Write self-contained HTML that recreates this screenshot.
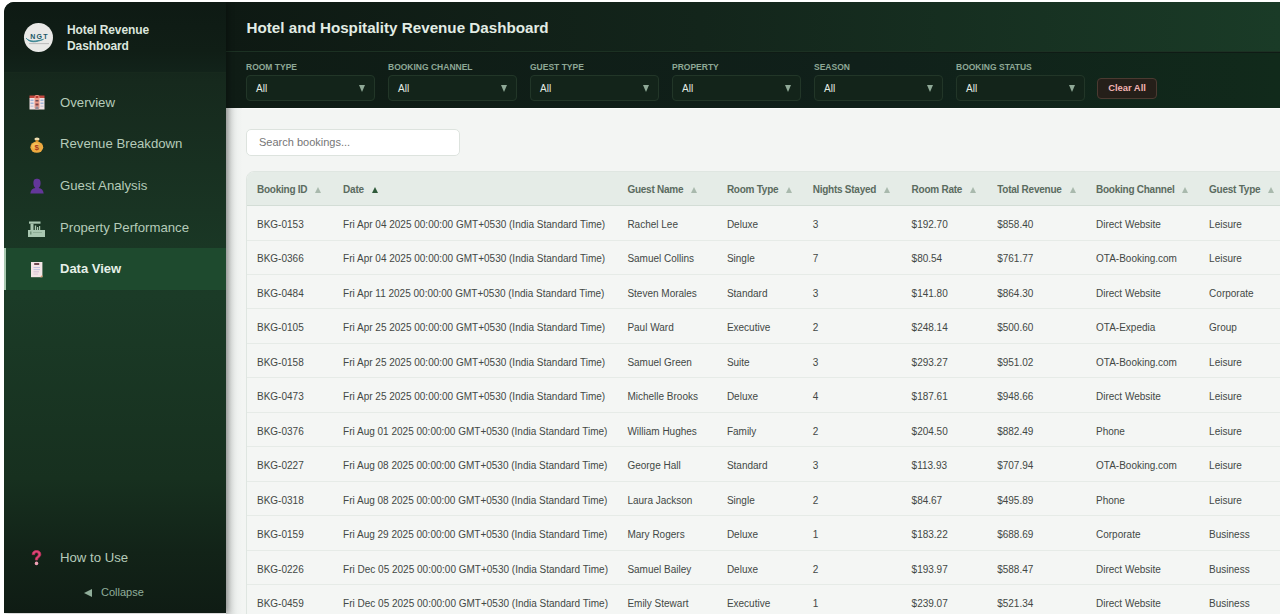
<!DOCTYPE html>
<html><head><meta charset="utf-8">
<style>
*{box-sizing:border-box;margin:0;padding:0}
html,body{width:1280px;height:614px;overflow:hidden;background:#fff;font-family:"Liberation Sans",sans-serif}
#app{position:absolute;left:4px;top:2px;width:1276px;height:612px;border-top-left-radius:10px;overflow:hidden;background:transparent}
#side{position:absolute;left:0;top:0;width:222px;height:610.5px;background:linear-gradient(180deg,#0f1c15 0%,#16291d 13%,#1b3b27 48%,#17301f 78%,#122318 90%,#0f1c14 100%);z-index:3;box-shadow:2px 0 6px rgba(0,0,0,0.35)}
#side .brand{position:absolute;left:0;top:0;width:222px;height:71px;background:linear-gradient(180deg,#0e1a14 0%,#101e16 70%,#12231a 100%);border-bottom:1px solid #17291d}
#logo{position:absolute;left:20px;top:21px;width:29px;height:29px;border-radius:50%;background:#e9e9e7}
.bt{position:absolute;left:63px;top:21px;color:#dce6de;letter-spacing:-0.1px;font-weight:700;font-size:12px;line-height:15.5px;width:120px}
.nav{position:absolute;left:0;width:222px;height:42px}
.nav .ic{position:absolute;left:24px;top:13px;width:16px;height:16px}
.nav .tx{position:absolute;left:56px;top:0;line-height:42px;font-size:13.2px;color:#b5cbb9;white-space:nowrap}
.sic{position:absolute;z-index:2}
#collapse{position:absolute;left:80px;top:582px;height:16px;color:#90ae9a;font-size:11px;line-height:16px;white-space:nowrap}
#collapse i{position:absolute;left:0;top:4.5px;width:0;height:0;border-top:4.2px solid transparent;border-bottom:4.2px solid transparent;border-right:8px solid #90ae9a}
#collapse span{position:absolute;left:17px;top:0}
.nav.act{background:#1e4a2e;border-left:2px solid #a9c9b1}
.nav.act .ic{left:22px}
.nav.act .tx{left:54px;font-weight:700;color:#e6f0e8;font-size:13px}
#main-h{position:absolute;left:222px;top:0;width:1054px;height:106px;background:#0f1b15;z-index:1}
#title{position:absolute;left:0;top:0;width:1054px;height:50px;background:linear-gradient(90deg,#0e1913 0%,#13251b 45%,#1a3b27 100%);border-bottom:1px solid #1c3123}
#title h1{position:absolute;left:20.5px;top:0;line-height:51px;font-size:15.2px;color:#e2ece4;font-weight:700;white-space:nowrap}
#filters{position:absolute;left:0;top:51px;width:1054px;height:55px;background:linear-gradient(90deg,#0f1c15 0%,#10201a 60%,#112a1b 100%)}
.fg{position:absolute;top:0;width:129px}
.fg .lb{position:absolute;left:0;top:8px;font-size:8.5px;font-weight:700;color:#8ea896;white-space:nowrap;line-height:12px}
.fg .sel{position:absolute;left:0;top:22px;width:129px;height:26px;border:1px solid #223628;border-radius:4px;background:#13241a}
.fg .sel span{position:absolute;left:9px;top:0;line-height:25px;font-size:10px;color:#e3ece5}
.fg .sel i{position:absolute;right:9px;top:9px;width:0;height:0;border-left:3.5px solid transparent;border-right:3.5px solid transparent;border-top:7px solid #8fa997}
#clear{position:absolute;left:871px;top:25px;width:60px;height:21px;border:1px solid #4b3a31;border-radius:4px;background:#251f19;color:#f2b3b3;font-weight:700;font-size:9.4px;line-height:17.5px;text-align:center}
#content{position:absolute;left:222px;top:106px;width:1054px;height:506px;background:#f3f5f3;border-top:1px solid #fbfcfb}
#shadow{position:absolute;left:222px;top:106px;width:16px;height:506px;background:linear-gradient(90deg,#d3d6d4,#eef1ef 70%,#f3f5f3);z-index:2}
#search{position:absolute;left:20px;top:20px;width:214px;height:27px;border:1px solid #dde3de;border-radius:5px;background:#fff}
#search span{position:absolute;left:12px;top:0;line-height:25px;font-size:11px;color:#767676}
#tbl{position:absolute;left:20px;top:62px;width:1100px;height:460px;border:1px solid #dfe6e1;border-radius:8px;overflow:hidden;background:#f4f6f4}
.hr{position:absolute;left:0;top:0;width:1100px;height:34px;background:#e5ece7;border-bottom:1px solid #d3ddd6}
.th{position:absolute;top:1px;line-height:34px;font-size:10px;font-weight:700;color:#5b6b5f;letter-spacing:-0.25px;white-space:nowrap}
.th b{display:inline-block;width:0;height:0;border-left:3.6px solid transparent;border-right:3.6px solid transparent;border-bottom:6px solid #a9b9ad;margin-left:8px;vertical-align:0px}
.th b.on{border-bottom-color:#2f5a3a}
.row{position:absolute;left:0;width:1100px;height:34.6px;border-bottom:1px solid #e6ebe7}
.td{position:absolute;top:2px;line-height:34px;font-size:10px;color:#434845;white-space:nowrap}
</style></head><body>
<div id="app">
  <div id="side">
    <div class="brand">
      <div id="logo"><svg width="29" height="29" viewBox="0 0 29 29">
        <text x="15.6" y="15.9" font-family="Liberation Sans" font-weight="700" font-size="7" fill="#1a5866" text-anchor="middle" letter-spacing="1.3">NGT</text>
        <path d="M2.2 15.2 C5 18.8 12 18.6 19.5 16.3 C12.5 19.6 5.5 20 2.2 15.2Z" fill="#2f7f8e" stroke="#2f7f8e" stroke-width="0.7"/>
        <rect x="5" y="20.2" width="20" height="0.9" fill="#a9a9a9" opacity="0.8"/>
      </svg></div>
      <div class="bt">Hotel Revenue<br>Dashboard</div>
    </div>
    <div class="nav" style="top:79.5px"><div class="ic"></div><div class="tx">Overview</div></div>
    <div class="nav" style="top:121.2px"><div class="ic"></div><div class="tx">Revenue Breakdown</div></div>
    <div class="nav" style="top:162.9px"><div class="ic"></div><div class="tx">Guest Analysis</div></div>
    <div class="nav" style="top:204.6px"><div class="ic"></div><div class="tx">Property Performance</div></div>
    <div class="nav act" style="top:246px"><div class="ic"></div><div class="tx">Data View</div></div>
    <div class="nav" style="top:535px"><div class="ic"></div><div class="tx">How to Use</div></div>
    <svg class="sic" style="left:24.5px;top:93px" width="16" height="15" viewBox="0 0 16 15">
      <rect x="0.5" y="0.5" width="15" height="3" fill="#c2473f"/>
      <rect x="0.5" y="3" width="15" height="11.5" fill="#efe2e4"/>
      <rect x="5.5" y="0" width="5" height="14.5" rx="2" fill="#ee9a88"/>
      <rect x="6.6" y="1" width="2.8" height="2" fill="#b93a32"/>
      <rect x="1.5" y="4.5" width="3" height="1.5" fill="#9fb4d8"/>
      <rect x="11.5" y="4.5" width="3" height="1.5" fill="#9fb4d8"/>
      <rect x="1.5" y="7.5" width="3" height="1.5" fill="#9fb4d8"/>
      <rect x="11.5" y="7.5" width="3" height="1.5" fill="#9fb4d8"/>
      <rect x="1.5" y="10.5" width="3" height="1.5" fill="#c9c9d9"/>
      <rect x="11.5" y="10.5" width="3" height="1.5" fill="#c9c9d9"/>
      <rect x="6.5" y="5" width="3" height="1.5" fill="#6b4a55"/>
      <rect x="6.5" y="8.5" width="3" height="2" fill="#7a4048"/>
      <rect x="6.5" y="11.5" width="3" height="3" fill="#8a8a9a"/>
    </svg>
    <svg class="sic" style="left:25.5px;top:134.5px" width="14" height="16" viewBox="0 0 14 16">
      <ellipse cx="7" cy="2" rx="2.6" ry="1.6" fill="#eedcae"/>
      <rect x="5.6" y="3" width="2.8" height="2" fill="#c98a2a"/>
      <ellipse cx="6.8" cy="10.2" rx="6.4" ry="5.6" fill="#eeaa40"/>
      <ellipse cx="5.5" cy="9" rx="3.5" ry="3" fill="#f5c460" opacity="0.7"/>
      <text x="6.8" y="13.3" font-family="Liberation Sans" font-weight="700" font-size="8" fill="#a8361c" text-anchor="middle">$</text>
    </svg>
    <svg class="sic" style="left:26px;top:176px" width="14" height="16" viewBox="0 0 14 16">
      <path d="M3.4 5.2 C3.4 1.6 4.8 0.8 7 0.8 C9.2 0.8 10.6 1.6 10.6 5.2 C10.6 7.8 9.6 9.3 8.6 10 C11.5 10.4 13.3 12 13.7 15.5 L0.3 15.5 C0.7 12 2.5 10.4 5.4 10 C4.4 9.3 3.4 7.8 3.4 5.2Z" fill="#63379a"/>
    </svg>
    <svg class="sic" style="left:24px;top:218.5px" width="18" height="16" viewBox="0 0 18 16">
      <rect x="1" y="0.5" width="11.5" height="2.2" fill="#a9c7b1"/>
      <rect x="2.5" y="2.7" width="3" height="7" fill="#a9c7b1"/>
      <rect x="6.8" y="4.5" width="1.4" height="5" fill="#a9c7b1"/>
      <rect x="9" y="6" width="1.2" height="3.5" fill="#a9c7b1"/>
      <rect x="11" y="5" width="1.2" height="4.5" fill="#a9c7b1"/>
      <rect x="0" y="9" width="17" height="7" fill="#a9c7b1"/>
      <rect x="2" y="10.5" width="1.5" height="3" fill="#6f8f78"/>
      <rect x="5" y="11" width="9" height="1" fill="#8fae97"/>
    </svg>
    <svg class="sic" style="left:26.8px;top:259.8px" width="12" height="16" viewBox="0 0 12 16">
      <rect x="0" y="0" width="11.4" height="15.2" fill="#f3e6e6"/>
      <rect x="3.2" y="1" width="5" height="2" fill="#6d4a52"/>
      <rect x="2.5" y="5" width="6.5" height="0.9" fill="#b9bfe0"/>
      <rect x="2.5" y="7.2" width="6.5" height="0.9" fill="#b9bfe0"/>
      <rect x="2.5" y="9.4" width="5.5" height="0.9" fill="#cdb9cf"/>
      <rect x="2.5" y="11.6" width="4.5" height="0.9" fill="#d8c6d4"/>
      <path d="M9 15.2 L11.4 12.8 L11.4 15.2Z" fill="#d99a70"/>
    </svg>
    <svg class="sic" style="left:27px;top:548px" width="11" height="16" viewBox="0 0 11 16">
      <path d="M1.2 4.6 C1.2 1.8 3 0.5 5.5 0.5 C8 0.5 9.8 1.9 9.8 4.3 C9.8 6.4 8.3 7.2 7.3 8 C6.6 8.5 6.6 9 6.6 10 L4.4 10 C4.4 8.5 4.6 7.6 5.8 6.6 C6.8 5.8 7.3 5.3 7.3 4.4 C7.3 3.3 6.6 2.6 5.5 2.6 C4.3 2.6 3.6 3.4 3.6 4.6Z" fill="#e2487a" stroke="#c8305e" stroke-width="0.8"/>
      <circle cx="5.5" cy="13.4" r="1.8" fill="#eea0b4"/>
    </svg>
    <div id="collapse"><i></i><span>Collapse</span></div>

  </div>
  <div id="main-h">
    <div id="title"><h1>Hotel and Hospitality Revenue Dashboard</h1></div>
    <div id="filters">
      <div class="fg" style="left:20px"><div class="lb">ROOM TYPE</div><div class="sel"><span>All</span><i></i></div></div>
      <div class="fg" style="left:162px"><div class="lb">BOOKING CHANNEL</div><div class="sel"><span>All</span><i></i></div></div>
      <div class="fg" style="left:304px"><div class="lb">GUEST TYPE</div><div class="sel"><span>All</span><i></i></div></div>
      <div class="fg" style="left:446px"><div class="lb">PROPERTY</div><div class="sel"><span>All</span><i></i></div></div>
      <div class="fg" style="left:588px"><div class="lb">SEASON</div><div class="sel"><span>All</span><i></i></div></div>
      <div class="fg" style="left:730px"><div class="lb">BOOKING STATUS</div><div class="sel"><span>All</span><i></i></div></div>
      <div id="clear">Clear All</div>
    </div>
  </div>
  <div id="shadow"></div>
  <div id="content">
    <div id="search"><span>Search bookings...</span></div>
    <div id="tbl">
<div class="hr">
<div class="th" style="left:10.0px">Booking ID<b></b></div>
<div class="th" style="left:96.1px">Date<b class="on"></b></div>
<div class="th" style="left:380.4px">Guest Name<b></b></div>
<div class="th" style="left:479.9px">Room Type<b></b></div>
<div class="th" style="left:565.7px">Nights Stayed<b></b></div>
<div class="th" style="left:664.6px">Room Rate<b></b></div>
<div class="th" style="left:750.2px">Total Revenue<b></b></div>
<div class="th" style="left:849.0px">Booking Channel<b></b></div>
<div class="th" style="left:962.1px">Guest Type<b></b></div>
</div>
<div class="row" style="top:34.00px">
<div class="td" style="left:10.0px">BKG-0153</div>
<div class="td" style="left:96.1px">Fri Apr 04 2025 00:00:00 GMT+0530 (India Standard Time)</div>
<div class="td" style="left:380.4px">Rachel Lee</div>
<div class="td" style="left:479.9px">Deluxe</div>
<div class="td" style="left:565.7px">3</div>
<div class="td" style="left:664.6px">$192.70</div>
<div class="td" style="left:750.2px">$858.40</div>
<div class="td" style="left:849.0px">Direct Website</div>
<div class="td" style="left:962.1px">Leisure</div>
</div>
<div class="row" style="top:68.45px">
<div class="td" style="left:10.0px">BKG-0366</div>
<div class="td" style="left:96.1px">Fri Apr 04 2025 00:00:00 GMT+0530 (India Standard Time)</div>
<div class="td" style="left:380.4px">Samuel Collins</div>
<div class="td" style="left:479.9px">Single</div>
<div class="td" style="left:565.7px">7</div>
<div class="td" style="left:664.6px">$80.54</div>
<div class="td" style="left:750.2px">$761.77</div>
<div class="td" style="left:849.0px">OTA-Booking.com</div>
<div class="td" style="left:962.1px">Leisure</div>
</div>
<div class="row" style="top:102.90px">
<div class="td" style="left:10.0px">BKG-0484</div>
<div class="td" style="left:96.1px">Fri Apr 11 2025 00:00:00 GMT+0530 (India Standard Time)</div>
<div class="td" style="left:380.4px">Steven Morales</div>
<div class="td" style="left:479.9px">Standard</div>
<div class="td" style="left:565.7px">3</div>
<div class="td" style="left:664.6px">$141.80</div>
<div class="td" style="left:750.2px">$864.30</div>
<div class="td" style="left:849.0px">Direct Website</div>
<div class="td" style="left:962.1px">Corporate</div>
</div>
<div class="row" style="top:137.35px">
<div class="td" style="left:10.0px">BKG-0105</div>
<div class="td" style="left:96.1px">Fri Apr 25 2025 00:00:00 GMT+0530 (India Standard Time)</div>
<div class="td" style="left:380.4px">Paul Ward</div>
<div class="td" style="left:479.9px">Executive</div>
<div class="td" style="left:565.7px">2</div>
<div class="td" style="left:664.6px">$248.14</div>
<div class="td" style="left:750.2px">$500.60</div>
<div class="td" style="left:849.0px">OTA-Expedia</div>
<div class="td" style="left:962.1px">Group</div>
</div>
<div class="row" style="top:171.80px">
<div class="td" style="left:10.0px">BKG-0158</div>
<div class="td" style="left:96.1px">Fri Apr 25 2025 00:00:00 GMT+0530 (India Standard Time)</div>
<div class="td" style="left:380.4px">Samuel Green</div>
<div class="td" style="left:479.9px">Suite</div>
<div class="td" style="left:565.7px">3</div>
<div class="td" style="left:664.6px">$293.27</div>
<div class="td" style="left:750.2px">$951.02</div>
<div class="td" style="left:849.0px">OTA-Booking.com</div>
<div class="td" style="left:962.1px">Leisure</div>
</div>
<div class="row" style="top:206.25px">
<div class="td" style="left:10.0px">BKG-0473</div>
<div class="td" style="left:96.1px">Fri Apr 25 2025 00:00:00 GMT+0530 (India Standard Time)</div>
<div class="td" style="left:380.4px">Michelle Brooks</div>
<div class="td" style="left:479.9px">Deluxe</div>
<div class="td" style="left:565.7px">4</div>
<div class="td" style="left:664.6px">$187.61</div>
<div class="td" style="left:750.2px">$948.66</div>
<div class="td" style="left:849.0px">Direct Website</div>
<div class="td" style="left:962.1px">Leisure</div>
</div>
<div class="row" style="top:240.70px">
<div class="td" style="left:10.0px">BKG-0376</div>
<div class="td" style="left:96.1px">Fri Aug 01 2025 00:00:00 GMT+0530 (India Standard Time)</div>
<div class="td" style="left:380.4px">William Hughes</div>
<div class="td" style="left:479.9px">Family</div>
<div class="td" style="left:565.7px">2</div>
<div class="td" style="left:664.6px">$204.50</div>
<div class="td" style="left:750.2px">$882.49</div>
<div class="td" style="left:849.0px">Phone</div>
<div class="td" style="left:962.1px">Leisure</div>
</div>
<div class="row" style="top:275.15px">
<div class="td" style="left:10.0px">BKG-0227</div>
<div class="td" style="left:96.1px">Fri Aug 08 2025 00:00:00 GMT+0530 (India Standard Time)</div>
<div class="td" style="left:380.4px">George Hall</div>
<div class="td" style="left:479.9px">Standard</div>
<div class="td" style="left:565.7px">3</div>
<div class="td" style="left:664.6px">$113.93</div>
<div class="td" style="left:750.2px">$707.94</div>
<div class="td" style="left:849.0px">OTA-Booking.com</div>
<div class="td" style="left:962.1px">Leisure</div>
</div>
<div class="row" style="top:309.60px">
<div class="td" style="left:10.0px">BKG-0318</div>
<div class="td" style="left:96.1px">Fri Aug 08 2025 00:00:00 GMT+0530 (India Standard Time)</div>
<div class="td" style="left:380.4px">Laura Jackson</div>
<div class="td" style="left:479.9px">Single</div>
<div class="td" style="left:565.7px">2</div>
<div class="td" style="left:664.6px">$84.67</div>
<div class="td" style="left:750.2px">$495.89</div>
<div class="td" style="left:849.0px">Phone</div>
<div class="td" style="left:962.1px">Leisure</div>
</div>
<div class="row" style="top:344.05px">
<div class="td" style="left:10.0px">BKG-0159</div>
<div class="td" style="left:96.1px">Fri Aug 29 2025 00:00:00 GMT+0530 (India Standard Time)</div>
<div class="td" style="left:380.4px">Mary Rogers</div>
<div class="td" style="left:479.9px">Deluxe</div>
<div class="td" style="left:565.7px">1</div>
<div class="td" style="left:664.6px">$183.22</div>
<div class="td" style="left:750.2px">$688.69</div>
<div class="td" style="left:849.0px">Corporate</div>
<div class="td" style="left:962.1px">Business</div>
</div>
<div class="row" style="top:378.50px">
<div class="td" style="left:10.0px">BKG-0226</div>
<div class="td" style="left:96.1px">Fri Dec 05 2025 00:00:00 GMT+0530 (India Standard Time)</div>
<div class="td" style="left:380.4px">Samuel Bailey</div>
<div class="td" style="left:479.9px">Deluxe</div>
<div class="td" style="left:565.7px">2</div>
<div class="td" style="left:664.6px">$193.97</div>
<div class="td" style="left:750.2px">$588.47</div>
<div class="td" style="left:849.0px">Direct Website</div>
<div class="td" style="left:962.1px">Business</div>
</div>
<div class="row" style="top:412.95px">
<div class="td" style="left:10.0px">BKG-0459</div>
<div class="td" style="left:96.1px">Fri Dec 05 2025 00:00:00 GMT+0530 (India Standard Time)</div>
<div class="td" style="left:380.4px">Emily Stewart</div>
<div class="td" style="left:479.9px">Executive</div>
<div class="td" style="left:565.7px">1</div>
<div class="td" style="left:664.6px">$239.07</div>
<div class="td" style="left:750.2px">$521.34</div>
<div class="td" style="left:849.0px">Direct Website</div>
<div class="td" style="left:962.1px">Business</div>
</div>
        </div>
  </div>
</div>
</body></html>
